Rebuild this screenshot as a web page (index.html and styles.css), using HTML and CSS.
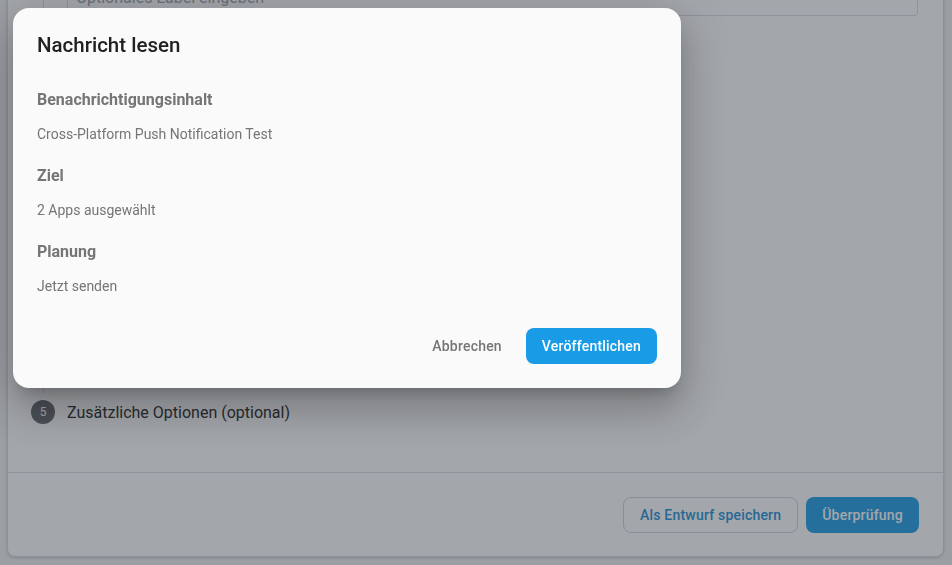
FILE: index.html
```html
<!DOCTYPE html>
<html lang="de">
<head>
<meta charset="utf-8">
<title>Nachricht lesen</title>
<link rel="stylesheet" href="styles.css">
</head>
<body>
<div class="viewport">
  <div class="card">
    <div class="steps">
      <div class="step-content">
        <div class="field"><span class="placeholder">Optionales Label eingeben</span></div>
      </div>
      <div class="step-head">
        <span class="step-num">5</span>
        <span class="step-title">Zusätzliche Optionen (optional)</span>
      </div>
    </div>
    <div class="card-footer">
      <button class="btn btn-outline">Als Entwurf speichern</button>
      <button class="btn btn-primary">Überprüfung</button>
    </div>
  </div>
</div>
<div class="overlay"></div>
<div class="dialog" role="dialog">
  <h2 class="dialog-title">Nachricht lesen</h2>
  <div class="dialog-body">
    <div class="label">Benachrichtigungsinhalt</div>
    <div class="value">Cross-Platform Push Notification Test</div>
    <div class="label">Ziel</div>
    <div class="value">2 Apps ausgewählt</div>
    <div class="label">Planung</div>
    <div class="value">Jetzt senden</div>
  </div>
  <div class="dialog-actions">
    <button class="btn btn-text">Abbrechen</button>
    <button class="btn btn-primary">Veröffentlichen</button>
  </div>
</div>
</body>
</html>
```

FILE: styles.css
```css
* { box-sizing: border-box; }
html, body {
  margin: 0;
  padding: 0;
  height: 100%;
}
body {
  background: #f0f0f2;
  font-family: Roboto, "Liberation Sans", Arial, sans-serif;
  overflow: hidden;
}
.viewport {
  height: 565px;
  overflow: hidden;
  padding: 0 8px 8px 7px;
}
.card {
  margin-top: -60px;
  height: 617px;
  background: #ffffff;
  border: 1px solid #d6d8dc;
  border-radius: 8px;
  box-shadow: 0 1px 3px rgba(0,0,0,0.18);
  display: flex;
  flex-direction: column;
}
.steps {
  flex: 1;
  display: flex;
  flex-direction: column;
}
.step-content {
  margin-left: 35px;
  border-left: 1px solid #dadce0;
  padding: 35px 25px 0 23px;
  height: 452px;
}
.field {
  height: 40px;
  border: 1px solid #dadce0;
  border-radius: 4px;
  padding: 0 8px;
  display: flex;
  align-items: center;
}
.placeholder {
  font-size: 16px;
  color: #9aa0a6;
  margin-top: 2px;
}
.step-head {
  margin-top: 7px;
  display: flex;
  align-items: center;
  gap: 12px;
  padding-left: 23px;
}
.step-num {
  width: 24px;
  height: 24px;
  border-radius: 50%;
  background: #5f6368;
  color: #ffffff;
  font-size: 12px;
  display: flex;
  align-items: center;
  justify-content: center;
}
.step-title {
  font-size: 16px;
  color: #202124;
}
.card-footer {
  border-top: 1px solid #dadce0;
  padding: 24px 24px 23px;
  display: flex;
  justify-content: flex-end;
  gap: 8px;
}
.btn {
  font-family: Roboto, "Liberation Sans", Arial, sans-serif;
  font-size: 14px;
  font-weight: 500;
  letter-spacing: 0.2px;
  height: 36px;
  border-radius: 8px;
  padding: 0 16px;
  border: none;
  background: transparent;
  cursor: pointer;
}
.btn-outline {
  border: 1px solid #d0d3d8;
  color: #1a8fd8;
  background: #ffffff;
}
.btn-primary {
  background: #1a9be6;
  color: #ffffff;
}
.btn-text {
  color: #757575;
}
.overlay {
  position: fixed;
  inset: 0;
  background: rgba(50, 57, 66, 0.45);
}
.dialog {
  position: fixed;
  left: 13px;
  top: 8px;
  width: 668px;
  height: 380px;
  background: #fafafa;
  border-radius: 16px;
  padding: 21px 24px 24px;
  box-shadow: 0 11px 15px -7px rgba(0,0,0,0.2), 0 24px 38px 3px rgba(0,0,0,0.14), 0 9px 46px 8px rgba(0,0,0,0.12);
  display: flex;
  flex-direction: column;
}
.dialog-title {
  margin: 0 0 27px;
  font-size: 20.5px;
  font-weight: 500;
  line-height: 32px;
  color: #212121;
}
.dialog-body {
  display: flex;
  flex-direction: column;
}
.label {
  font-size: 16px;
  font-weight: 700;
  line-height: 24px;
  color: #757575;
  margin-bottom: 12px;
}
.value {
  font-size: 14px;
  line-height: 20px;
  color: #757575;
  margin-bottom: 20px;
}
.dialog-actions {
  margin-top: auto;
  display: flex;
  justify-content: flex-end;
  gap: 8px;
}
```
